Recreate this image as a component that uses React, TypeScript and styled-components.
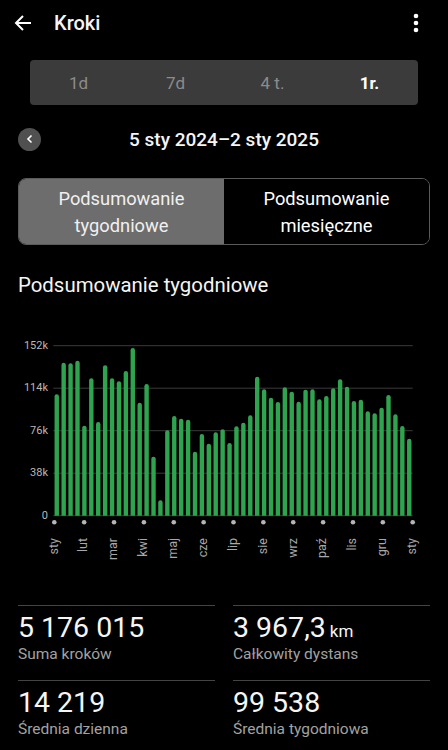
import React from "react";
import styled, { createGlobalStyle } from "styled-components";

const GlobalStyle = createGlobalStyle`
  html, body {
    margin: 0;
    padding: 0;
    background: #000;
  }
  body {
    font-family: Roboto, "Noto Sans", "Liberation Sans", sans-serif;
    color: #f2f2f2;
  }
`;

// weekly step totals, in thousands
const weeks = [
  108.5, 136.8, 136.3, 138.6, 80.5, 122.9, 83.8, 134.5, 122.9, 120.2, 129.4, 149.9, 101.0,
  117.8, 52.8, 13.8, 76.4, 89.1, 86.7, 85.8, 57.2, 73.0, 64.4, 74.6, 77.3, 65.0, 79.9, 83.2,
  89.8, 124.3, 113.0, 105.5, 101.7, 114.8, 110.9, 101.9, 112.7, 113.0, 104.1, 107.0, 113.9,
  122.0, 115.3, 102.6, 103.7, 93.3, 91.6, 96.6, 107.9, 90.7, 80.2, 68.8,
];

const months = ["sty", "lut", "mar", "kwi", "maj", "cze", "lip", "sie", "wrz", "paź", "lis", "gru", "sty"];
const ticks = [152, 114, 76, 38, 0];

const periods = ["1d", "7d", "4 t.", "1r."];

const Page = styled.div`
  width: 448px;
  min-height: 750px;
  background: #000;
  display: flex;
  flex-direction: column;
`;

const Header = styled.div`
  height: 46px;
  display: flex;
  align-items: center;
  padding: 0 29px 0 14px;
`;

const Title = styled.div`
  flex: 1;
  margin-left: 22px;
  font-size: 20px;
  font-weight: 500;
  color: #f5f5f5;
`;

const IconBtn = styled.div`
  display: flex;
  align-items: center;
  justify-content: center;
`;

const Periods = styled.div`
  margin: 14px 30px 0;
  height: 45px;
  background: #3b3b3b;
  border-radius: 4px;
  display: grid;
  grid-template-columns: repeat(4, 1fr);
`;

const Period = styled.div<{ $active?: boolean }>`
  display: flex;
  align-items: center;
  justify-content: center;
  font-size: 17px;
  font-weight: ${({ $active }) => ($active ? 700 : 400)};
  color: ${({ $active }) => ($active ? "#ffffff" : "#8c8c8c")};
`;

const DateRow = styled.div`
  margin: 22px 18px 0;
  height: 24px;
  display: flex;
  align-items: center;
`;

const RoundBtn = styled.div`
  width: 23px;
  height: 23px;
  border-radius: 50%;
  background: #505050;
  display: flex;
  align-items: center;
  justify-content: center;
`;

const DateText = styled.div`
  flex: 1;
  padding-right: 23px;
  text-align: center;
  font-size: 19px;
  font-weight: 500;
  color: #f5f5f5;
`;

const Toggle = styled.div`
  margin: 27px 18px 0;
  height: 67px;
  border: 1px solid #5a5a5a;
  border-radius: 8px;
  overflow: hidden;
  display: grid;
  grid-template-columns: 1fr 1fr;
  box-sizing: border-box;
`;

const ToggleItem = styled.div<{ $active?: boolean }>`
  display: flex;
  align-items: center;
  justify-content: center;
  text-align: center;
  font-size: 18.3px;
  line-height: 27px;
  background: ${({ $active }) => ($active ? "#6d6d6d" : "#000")};
  color: ${({ $active }) => ($active ? "#f0f0f0" : "#ffffff")};
`;

const Heading = styled.div`
  margin: 28px 18px 0;
  font-size: 20.4px;
  line-height: 24px;
  color: #f5f5f5;
`;

const ChartBox = styled.div`
  margin-top: 33px;
  height: 240px;
`;

const Stats = styled.div`
  margin: 35px 18px 0;
  display: grid;
  grid-template-columns: 1fr 1fr;
  column-gap: 18px;
`;

const Stat = styled.div`
  border-top: 1px solid #444;
  padding-top: 6px;
  padding-bottom: 17px;
`;

const Value = styled.div`
  font-size: 28.5px;
  line-height: 32px;
  height: 32px;
  color: #f5f5f5;
`;

const Unit = styled.span`
  font-size: 17px;
  line-height: 1;
  margin-left: 4px;
`;

const Label = styled.div`
  margin-top: 1px;
  font-size: 15.5px;
  line-height: 18px;
  color: #a2a2a2;
`;

const WeeklyChart = () => {
  const left = 53.3;
  const right = 412.7;
  const base = 185.7;
  const top = 15.7;
  const scale = (base - top) / 152;
  const slot = (right - left) / weeks.length;
  const w = 4.4;
  const r = w / 2;
  const step = (right - 54.3) / 12;

  return (
    <svg width="448" height="240" viewBox="0 0 448 240">
      {ticks.map((t) => {
        const y = base - t * scale;
        return (
          <g key={t}>
            <line x1={left} x2={right} y1={y} y2={y} stroke="#3a3a3a" strokeWidth="1" />
            <text
              x="48"
              y={y}
              textAnchor="end"
              dominantBaseline="middle"
              fontSize="11"
              fill="#b8b8b8"
              fontFamily="Roboto, sans-serif"
            >
              {t === 0 ? "0" : `${t}k`}
            </text>
          </g>
        );
      })}
      {weeks.map((v, i) => {
        const cx = left + slot * (i + 0.5);
        const x = cx - r;
        const y = base - v * scale;
        return (
          <path
            key={i}
            d={`M${x},${base} V${y + r} A${r},${r} 0 0 1 ${x + w},${y + r} V${base} Z`}
            fill="#2ea44f"
          />
        );
      })}
      {months.map((m, i) => {
        const x = 54.3 + step * i;
        return (
          <g key={i}>
            <circle cx={x} cy="192.3" r="2.3" fill="#b5b5b5" />
            <text
              transform={`translate(${x} 208) rotate(-90)`}
              textAnchor="end"
              dominantBaseline="middle"
              fontSize="12.5"
              fill="#a8a8a8"
              fontFamily="Roboto, sans-serif"
            >
              {m}
            </text>
          </g>
        );
      })}
    </svg>
  );
};

const stats = [
  { value: "5 176 015", label: "Suma kroków" },
  { value: "3 967,3", unit: "km", label: "Całkowity dystans" },
  { value: "14 219", label: "Średnia dzienna" },
  { value: "99 538", label: "Średnia tygodniowa" },
];

export default function App() {
  return (
    <Page>
      <GlobalStyle />
      <Header>
        <IconBtn>
          <svg width="18" height="18" viewBox="0 0 18 18">
            <path d="M17 9H2M9 2L2 9l7 7" fill="none" stroke="#fff" strokeWidth="2" />
          </svg>
        </IconBtn>
        <Title>Kroki</Title>
        <IconBtn>
          <svg width="6" height="20" viewBox="0 0 6 20">
            <circle cx="3" cy="3" r="2.3" fill="#fff" />
            <circle cx="3" cy="10" r="2.3" fill="#fff" />
            <circle cx="3" cy="17" r="2.3" fill="#fff" />
          </svg>
        </IconBtn>
      </Header>

      <Periods>
        {periods.map((p) => (
          <Period key={p} $active={p === "1r."}>
            {p}
          </Period>
        ))}
      </Periods>

      <DateRow>
        <RoundBtn>
          <svg width="10" height="10" viewBox="0 0 10 10">
            <path d="M6.5 1.5L3 5l3.5 3.5" fill="none" stroke="#fff" strokeWidth="1.6" />
          </svg>
        </RoundBtn>
        <DateText>5 sty 2024–2 sty 2025</DateText>
      </DateRow>

      <Toggle>
        <ToggleItem $active>
          Podsumowanie
          <br />
          tygodniowe
        </ToggleItem>
        <ToggleItem>
          Podsumowanie
          <br />
          miesięczne
        </ToggleItem>
      </Toggle>

      <Heading>Podsumowanie tygodniowe</Heading>

      <ChartBox>
        <WeeklyChart />
      </ChartBox>

      <Stats>
        {stats.map((s) => (
          <Stat key={s.label}>
            <Value>
              {s.value}
              {s.unit && <Unit>{s.unit}</Unit>}
            </Value>
            <Label>{s.label}</Label>
          </Stat>
        ))}
      </Stats>
    </Page>
  );
}
